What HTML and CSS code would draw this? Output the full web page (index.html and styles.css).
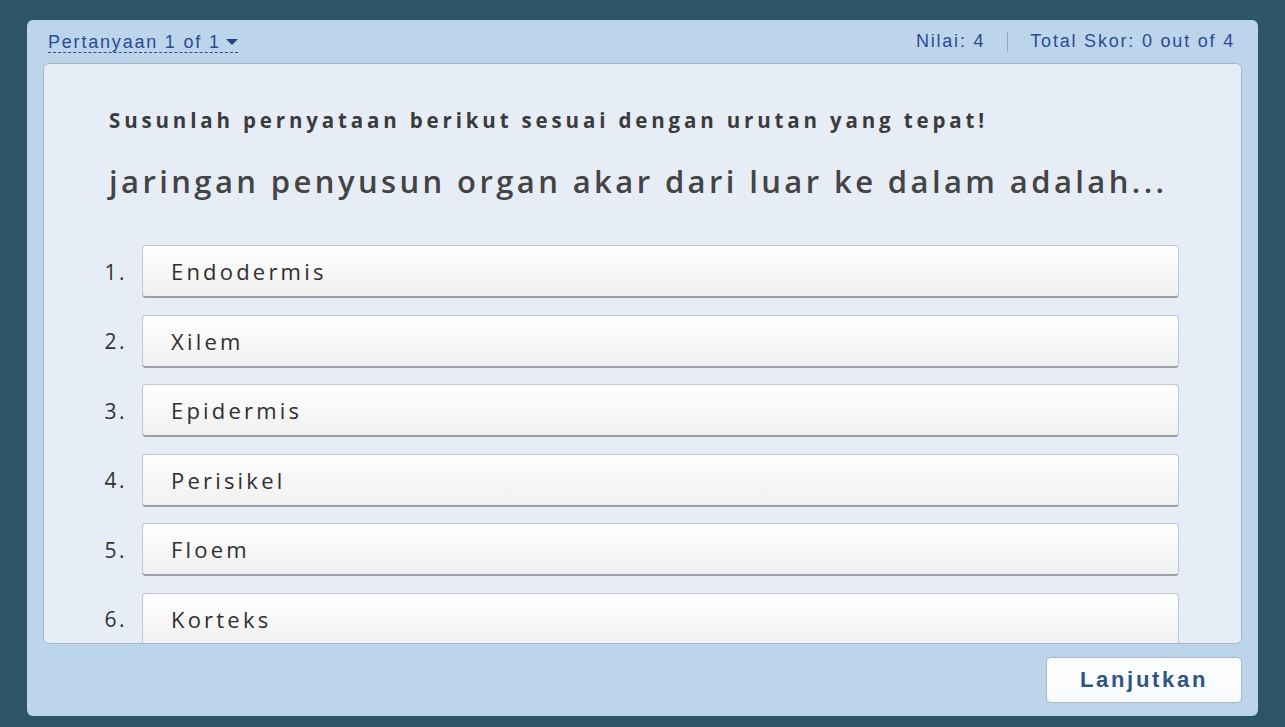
FILE: index.html
```html
<!DOCTYPE html>
<html>
<head>
<meta charset="utf-8">
<link rel="stylesheet" href="styles.css">
</head>
<body>
<div class="panel">
  <div class="topbar">
    <span class="qnav">Pertanyaan 1 of 1<span class="caret"></span></span>
    <div class="scores">
      <span>Nilai: 4</span>
      <span class="sep"></span>
      <span>Total Skor: 0 out of 4</span>
    </div>
  </div>
  <div class="card">
    <p class="instr">Susunlah pernyataan berikut sesuai dengan urutan yang tepat!</p>
    <p class="question">jaringan penyusun organ akar dari luar ke dalam adalah...</p>
    <ol class="items">
      <li class="item"><span class="num">1.</span><div class="box">Endodermis</div></li>
      <li class="item"><span class="num">2.</span><div class="box">Xilem</div></li>
      <li class="item"><span class="num">3.</span><div class="box">Epidermis</div></li>
      <li class="item"><span class="num">4.</span><div class="box">Perisikel</div></li>
      <li class="item"><span class="num">5.</span><div class="box">Floem</div></li>
      <li class="item"><span class="num">6.</span><div class="box">Korteks</div></li>
    </ol>
  </div>
  <div class="footer">
    <button class="next">Lanjutkan</button>
  </div>
</div>
</body>
</html>
```
FILE: styles.css
```css
html, body {
  margin: 0;
  height: 100%;
}
body {
  background: #2e5469;
  padding: 20px 27px 11px 27px;
  box-sizing: border-box;
  height: 727px;
  overflow: hidden;
}
.panel {
  background: #bdd5eb;
  border-radius: 6px;
  height: 696px;
  display: flex;
  flex-direction: column;
  padding: 0 16px;
  box-sizing: border-box;
}
.topbar {
  height: 43px;
  display: flex;
  align-items: center;
  justify-content: space-between;
  padding: 0 7px 0 5px;
  font-family: "Liberation Sans", Arial, sans-serif;
  font-size: 18px;
  letter-spacing: 1.8px;
  color: #2b4a93;
}
.qnav {
  border-bottom: 1px dashed #2b4a93;
  line-height: 19px;
  display: inline-flex;
  align-items: center;
  margin-top: 2px;
}
.caret {
  display: inline-block;
  width: 0;
  height: 0;
  border-left: 6px solid transparent;
  border-right: 6px solid transparent;
  border-top: 6px solid #23417e;
  margin-left: 5px;
}
.scores {
  display: flex;
  align-items: center;
  gap: 22px;
}
.sep {
  width: 1px;
  height: 20px;
  background: #8fa6c4;
}
.card {
  flex: 1;
  background: #e7edf7;
  border: 1px solid #a3b7cf;
  border-radius: 6px;
  overflow: hidden;
  padding: 0 62px 0 65px;
  font-family: "Open Sans", sans-serif;
  color: #3a3a3a;
}
.instr {
  margin: 41px 0 0 0;
  font-size: 20.5px;
  font-weight: 700;
  line-height: 30px;
  letter-spacing: 3.85px;
  color: #3b3b3b;
  white-space: nowrap;
}
.question {
  margin: 26px 0 0 0;
  font-size: 31px;
  font-weight: 600;
  line-height: 40px;
  letter-spacing: 3.4px;
  color: #444;
  white-space: nowrap;
}
.items {
  list-style: none;
  margin: 44px 0 0 -9px;
  padding: 0;
  display: flex;
  flex-direction: column;
  gap: 16.6px;
}
.item {
  display: flex;
  align-items: center;
}
.num {
  width: 27px;
  text-align: right;
  margin-right: 15px;
  font-size: 21px;
  letter-spacing: 2.5px;
  color: #333;
  white-space: nowrap;
}
.box {
  flex: 1;
  box-sizing: border-box;
  height: 53px;
  display: flex;
  align-items: center;
  padding-left: 28px;
  font-size: 22px;
  letter-spacing: 3.2px;
  color: #2f2f2f;
  background: linear-gradient(#ffffff, #f0f0f0);
  border: 1px solid #c3c6cc;
  border-bottom: 2px solid #9a9ea6;
  border-radius: 4px;
}
.footer {
  height: 72px;
  display: flex;
  justify-content: flex-end;
  align-items: flex-start;
  padding-top: 13px;
  box-sizing: border-box;
}
.next {
  width: 196px;
  height: 46px;
  background: linear-gradient(#ffffff, #f8fafd);
  border: 1px solid #a8b6c6;
  border-radius: 5px;
  font-family: "Liberation Sans", Arial, sans-serif;
  font-weight: 700;
  font-size: 22px;
  letter-spacing: 2.7px;
  color: #2f5587;
  padding: 0;
}
```
